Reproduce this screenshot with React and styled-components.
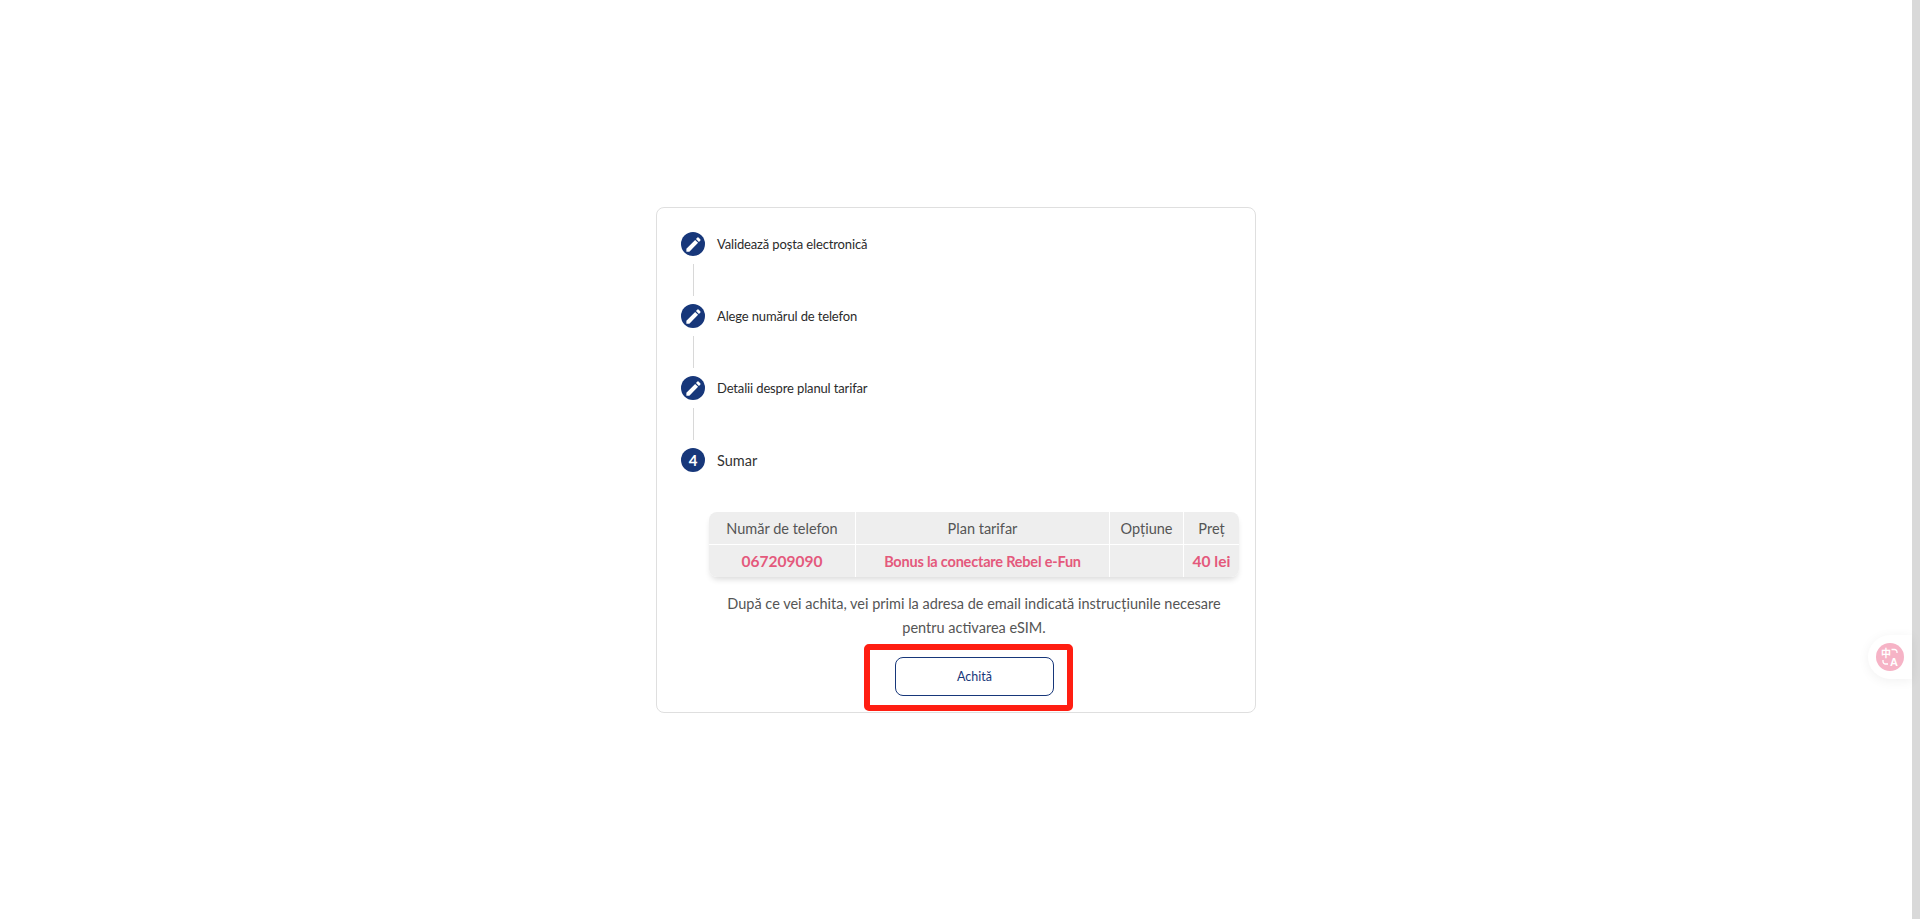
import styled, { createGlobalStyle } from 'styled-components'

const GlobalStyle = createGlobalStyle`
html, body {
    margin: 0;
    padding: 0;
    background: #fff;
    font-family: "Lato", "Open Sans", sans-serif;
    overflow: hidden;
}
`

const Page = styled.div`
display: flex;
height: 919px;
position: relative;
`

const Main = styled.main`
flex: 1;
display: flex;
justify-content: center;
align-items: flex-start;
padding-top: 207px;
box-sizing: border-box;
`

const ScrollTrack = styled.div`
width: 8px;
background-color: #d9d9d9;
`

const Card = styled.section`
width: 600px;
height: 506px;
box-sizing: border-box;
border: 1px solid #dfdfdf;
border-radius: 8px;
padding: 24px;
background: #fff;
`

const Step = styled.div`
display: flex;
align-items: center;
gap: 12px;
height: 24px;
color: #222;
`

const Circle = styled.span`
width: 24px;
height: 24px;
border-radius: 50%;
background-color: #17377a;
color: #fff;
display: flex;
align-items: center;
justify-content: center;
font-size: 15px;
font-weight: 700;
flex: none;

svg {
    width: 19px;
    height: 19px;
    fill: #fff;
}
`

const StepLabel = styled.span`
font-size: ${({ $active }) => ($active ? '14.5px' : '13px')};
letter-spacing: ${({ $active }) => ($active ? '0' : '-0.14px')};
color: ${({ $active }) => ($active ? '#333' : '#2b2b2b')};
`

const Connector = styled.div`
width: 1px;
height: 32px;
margin: 8px 0 8px 12px;
background-color: #d8d8d8;
`

const Content = styled.div`
margin: 40px 0 0 28px;
width: 530px;
display: flex;
flex-direction: column;
align-items: center;
`

const Table = styled.div`
width: 530px;
display: grid;
grid-template-columns: 147px 254px 74px 55px;
grid-template-rows: 33px 32px;
border-radius: 8px;
overflow: hidden;
background-color: #eee;
`

const TableShadow = styled.div`
border-radius: 8px;
box-shadow: 0 4px 6px -2px rgba(0, 0, 0, 0.16);
`

const Cell = styled.div`
display: flex;
align-items: center;
justify-content: center;
box-sizing: border-box;
font-size: ${({ $big }) => ($big ? '15.5px' : '14.5px')};
letter-spacing: ${({ $tight }) => ($tight ? '-0.2px' : '0')};
color: ${({ $price }) => ($price ? '#e4597c' : '#555')};
font-weight: ${({ $price }) => ($price ? 700 : 400)};
border-right: ${({ $last }) => ($last ? '0' : '1px solid #fff')};
border-bottom: ${({ $head }) => ($head ? '1px solid #fff' : '0')};
`

const Note = styled.p`
margin: 15px 0 0;
width: 510px;
font-size: 14.5px;
line-height: 24px;
color: #555;
text-align: center;
`

const Highlight = styled.div`
margin: 4px 11px 0 0;
width: 209px;
height: 67px;
box-sizing: border-box;
border: 6px solid #ff1e12;
border-radius: 5px;
padding: 7px 0 0 25px;
`

const PayButton = styled.button`
display: block;
width: 159px;
height: 39px;
box-sizing: border-box;
border: 1px solid #17377a;
border-radius: 8px;
background: #fff;
color: #17377a;
font-family: inherit;
font-size: 12.5px;
padding: 0;
`

const Floating = styled.div`
position: absolute;
right: 8px;
top: 635px;
width: 44px;
height: 44px;
border-radius: 22px 0 0 22px;
background: #fff;
box-shadow: 0 2px 12px rgba(0, 0, 0, 0.06);
display: flex;
align-items: center;
padding-left: 8px;
box-sizing: border-box;
`

const TranslateBadge = styled.svg`
width: 28px;
height: 28px;
display: block;
`

const Edit = () => (
    <svg viewBox="0 0 24 24">
        <path d="M3 17.25V21h3.75L17.81 9.94l-3.75-3.75L3 17.25zM20.71 7.04c.39-.39.39-1.02 0-1.41l-2.34-2.34a.9959.9959 0 0 0-1.41 0l-1.83 1.83 3.75 3.75 1.83-1.83z" />
    </svg>
)

const steps = ['Validează poșta electronică', 'Alege numărul de telefon', 'Detalii despre planul tarifar']

export default function App() {
    return (
        <Page>
            <GlobalStyle />
            <Main>
                <Card>
                    {steps.map((label) => (
                        <div key={label}>
                            <Step>
                                <Circle><Edit /></Circle>
                                <StepLabel>{label}</StepLabel>
                            </Step>
                            <Connector />
                        </div>
                    ))}
                    <Step>
                        <Circle>4</Circle>
                        <StepLabel $active>Sumar</StepLabel>
                    </Step>
                    <Content>
                        <TableShadow>
                            <Table>
                                <Cell $head>Număr de telefon</Cell>
                                <Cell $head>Plan tarifar</Cell>
                                <Cell $head>Opțiune</Cell>
                                <Cell $head $last>Preț</Cell>
                                <Cell $price $big>067209090</Cell>
                                <Cell $price $tight>Bonus la conectare Rebel e-Fun</Cell>
                                <Cell $price></Cell>
                                <Cell $price $big $last>40 lei</Cell>
                            </Table>
                        </TableShadow>
                        <Note>După ce vei achita, vei primi la adresa de email indicată instrucțiunile necesare pentru activarea eSIM.</Note>
                        <Highlight>
                            <PayButton>Achită</PayButton>
                        </Highlight>
                    </Content>
                </Card>
            </Main>
            <ScrollTrack />
            <Floating>
                <TranslateBadge viewBox="0 0 28 28">
                    <circle cx="14" cy="14" r="14" fill="#f6b3c6" />
                    <text x="5" y="14" fontSize="10" fill="#fff" fontWeight="700" fontFamily="Noto Sans CJK SC, sans-serif">中</text>
                    <text x="14" y="23" fontSize="11" fill="#fff" fontWeight="700" fontFamily="Liberation Sans, sans-serif">A</text>
                    <path d="M15.5 6.5h3a2.5 2.5 0 0 1 2.5 2.5v1M7 17v1.5a2.5 2.5 0 0 0 2.5 2.5h2.5" fill="none" stroke="#fff" strokeWidth="1.3" />
                </TranslateBadge>
            </Floating>
        </Page>
    )
}
